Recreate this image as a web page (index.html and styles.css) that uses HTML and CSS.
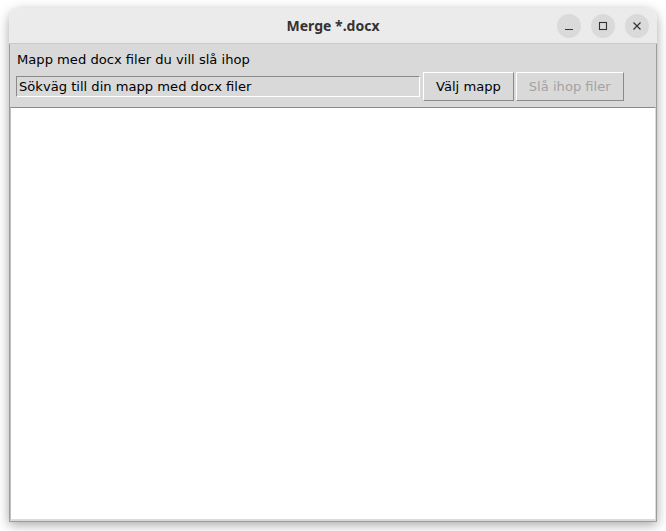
FILE: index.html
```html
<!DOCTYPE html>
<html>
<head>
<meta charset="utf-8">
<link rel="stylesheet" href="styles.css">
</head>
<body>
<div class="window">
  <div class="titlebar">
    <div class="title">Merge *.docx</div>
    <div class="controls">
      <span class="ctl"><svg width="10" height="10" viewBox="0 0 10 10"><path d="M1 8.5h8" stroke="#333" stroke-width="1.2"/></svg></span>
      <span class="ctl"><svg width="10" height="10" viewBox="0 0 10 10"><rect x="1.5" y="1.5" width="7" height="7" fill="none" stroke="#333" stroke-width="1.1"/></svg></span>
      <span class="ctl"><svg width="10" height="10" viewBox="0 0 10 10"><path d="M1.5 1.5l7 7M8.5 1.5l-7 7" stroke="#333" stroke-width="1.2"/></svg></span>
    </div>
  </div>
  <div class="content">
    <div class="label">Mapp med docx filer du vill slå ihop</div>
    <div class="row">
      <div class="entry">Sökväg till din mapp med docx filer</div>
      <div class="btn">Välj mapp</div>
      <div class="btn disabled">Slå ihop filer</div>
    </div>
    <div class="textarea"></div>
  </div>
</div>
</body>
</html>
```

FILE: styles.css
```css
html, body {
  margin: 0;
  padding: 0;
  background: #ffffff;
}
body {
  width: 666px;
  height: 531px;
  overflow: hidden;
}
.window {
  margin: 8px 0 0 9px;
  width: 648px;
  height: 514px;
  border-radius: 12px 12px 0 0;
  box-shadow: 0 3px 12px rgba(0,0,0,0.35);
  display: flex;
  flex-direction: column;
  overflow: hidden;
  box-sizing: border-box;
}
.titlebar {
  height: 36px;
  flex: none;
  background: #ebebeb;
  border-bottom: 1px solid #c9c9c9;
  position: relative;
  display: flex;
  align-items: center;
  justify-content: center;
  box-sizing: border-box;
}
.title {
  font-family: "Noto Sans", sans-serif;
  font-weight: bold;
  font-size: 14px;
  color: #333;
}
.controls {
  position: absolute;
  right: 8px;
  top: 6px;
  display: flex;
  gap: 10px;
}
.ctl {
  width: 24px;
  height: 24px;
  border-radius: 50%;
  background: #dadada;
  display: flex;
  align-items: center;
  justify-content: center;
}
.content {
  flex: 1;
  background: #d9d9d9;
  border: 1px solid #9c9c9c;
  border-top: none;
  display: flex;
  flex-direction: column;
  font-family: "DejaVu Sans", sans-serif;
  font-size: 13.1px;
  color: #000;
  box-sizing: border-box;
  padding: 0 0 1px 0;
}
.label {
  padding: 7px 0 0 7px;
  height: 20px;
  line-height: 18px;
}
.row {
  display: flex;
  align-items: center;
  padding: 0 0 0 6px;
  height: 30px;
  gap: 2px;
}
.entry {
  width: 404px;
  height: 21px;
  box-sizing: border-box;
  border-top: 1px solid #8a8a8a;
  border-left: 1px solid #8a8a8a;
  border-bottom: 1px solid #ffffff;
  border-right: 1px solid #ffffff;
  padding: 1px 0 0 2px;
  line-height: 18px;
  margin-right: 1px;
}
.btn {
  height: 29px;
  box-sizing: border-box;
  border-top: 1px solid #ffffff;
  border-left: 1px solid #ffffff;
  border-bottom: 1px solid #8a8a8a;
  border-right: 1px solid #8a8a8a;
  padding: 0 12px;
  display: flex;
  align-items: center;
}
.btn.disabled {
  color: #a3a3a3;
}
.textarea {
  flex: 1;
  margin-top: 6px;
  background: #ffffff;
  border-top: 1px solid #8a8a8a;
  border-left: 1px solid #c0c0c0;
  border-right: 1px solid #dcdcdc;
  border-bottom: 1px solid #dcdcdc;
}
```
